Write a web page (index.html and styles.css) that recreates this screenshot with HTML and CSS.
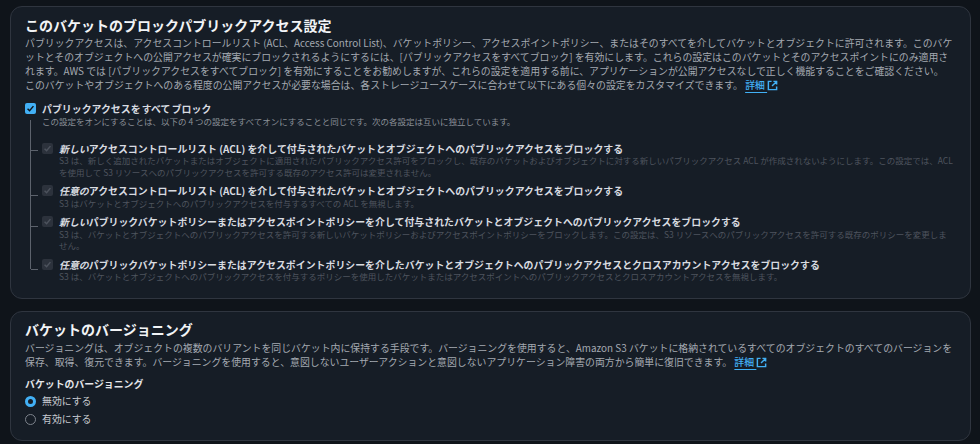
FILE: index.html
```html
<!DOCTYPE html>
<html lang="ja">
<head>
    <meta charset="UTF-8">
    <title>バケット設定</title>
    <link rel="stylesheet" href="styles.css">
</head>
<body>
    <section class="card block-card">
        <h2 class="card-title">このバケットのブロックパブリックアクセス設定</h2>
        <p class="card-text">パブリックアクセスは、アクセスコントロールリスト (ACL、Access Control List)、バケットポリシー、アクセスポイントポリシー、またはそのすべてを介してバケットとオブジェクトに許可されます。このバケ<br>ットとそのオブジェクトへの公開アクセスが確実にブロックされるようにするには、[パブリックアクセスをすべてブロック] を有効にします。これらの設定はこのバケットとそのアクセスポイントにのみ適用さ<br>れます。AWS では [パブリックアクセスをすべてブロック] を有効にすることをお勧めしますが、これらの設定を適用する前に、アプリケーションが公開アクセスなしで正しく機能することをご確認ください。<br>このバケットやオブジェクトへのある程度の公開アクセスが必要な場合は、各ストレージユースケースに合わせて以下にある個々の設定をカスタマイズできます。 <a class="info-link" href="#">詳細&nbsp;</a><svg class="ext-icon" viewBox="0 0 12 12"><path d="M5 1.5H1.5v9h9V7M7 1.5h3.5V5M10.2 1.8 5.5 6.5"/></svg></p>

        <div class="check-row main-check">
            <span class="checkbox checked"><svg viewBox="0 0 12 12"><path d="M2.8 6.2 5 8.4 9.2 3.4"/></svg></span>
            <div>
                <div class="check-label main-label">パブリックアクセスを すべて ブロック</div>
                <div class="check-desc main-desc">この設定をオンにすることは、以下の 4 つの設定をすべてオンにすることと同じです。次の各設定は互いに独立しています。</div>
            </div>
        </div>

        <ul class="check-tree">
            <li class="check-row tree-item">
                <span class="checkbox disabled"><svg viewBox="0 0 12 12"><path d="M2.8 6.2 5 8.4 9.2 3.4"/></svg></span>
                <div>
                    <div class="check-label"><em>新しい</em>アクセスコントロールリスト (ACL) を介して付与されたバケットとオブジェクトへのパブリックアクセスをブロックする</div>
                    <div class="check-desc">S3 は、新しく追加されたバケットまたはオブジェクトに適用されたパブリックアクセス許可をブロックし、既存のバケットおよびオブジェクトに対する新しいパブリックアクセス ACL が作成されないようにします。この設定では、ACL<br>を使用して S3 リソースへのパブリックアクセスを許可する既存のアクセス許可は変更されません。</div>
                </div>
            </li>
            <li class="check-row tree-item">
                <span class="checkbox disabled"><svg viewBox="0 0 12 12"><path d="M2.8 6.2 5 8.4 9.2 3.4"/></svg></span>
                <div>
                    <div class="check-label"><em>任意の</em>アクセスコントロールリスト (ACL) を介して付与されたバケットとオブジェクトへのパブリックアクセスをブロックする</div>
                    <div class="check-desc">S3 はバケットとオブジェクトへのパブリックアクセスを付与するすべての ACL を無視します。</div>
                </div>
            </li>
            <li class="check-row tree-item">
                <span class="checkbox disabled"><svg viewBox="0 0 12 12"><path d="M2.8 6.2 5 8.4 9.2 3.4"/></svg></span>
                <div>
                    <div class="check-label"><em>新しい</em>パブリックバケットポリシーまたはアクセスポイントポリシーを介して付与されたバケットとオブジェクトへのパブリックアクセスをブロックする</div>
                    <div class="check-desc">S3 は、バケットとオブジェクトへのパブリックアクセスを許可する新しいバケットポリシーおよびアクセスポイントポリシーをブロックします。この設定は、S3 リソースへのパブリックアクセスを許可する既存のポリシーを変更しま<br>せん。</div>
                </div>
            </li>
            <li class="check-row tree-item">
                <span class="checkbox disabled"><svg viewBox="0 0 12 12"><path d="M2.8 6.2 5 8.4 9.2 3.4"/></svg></span>
                <div>
                    <div class="check-label"><em>任意の</em>パブリックバケットポリシーまたはアクセスポイントポリシーを介したバケットとオブジェクトへのパブリックアクセスとクロスアカウントアクセスをブロックする</div>
                    <div class="check-desc">S3 は、バケットとオブジェクトへのパブリックアクセスを付与するポリシーを使用したバケットまたはアクセスポイントへのパブリックアクセスとクロスアカウントアクセスを無視します。</div>
                </div>
            </li>
        </ul>
    </section>

    <section class="card version-card">
        <h2 class="card-title">バケットのバージョニング</h2>
        <p class="card-text">バージョニングは、オブジェクトの複数のバリアントを同じバケット内に保持する手段です。バージョニングを使用すると、Amazon S3 バケットに格納されているすべてのオブジェクトのすべてのバージョンを<br>保存、取得、復元できます。バージョニングを使用すると、意図しないユーザーアクションと意図しないアプリケーション障害の両方から簡単に復旧できます。 <a class="info-link" href="#">詳細&nbsp;</a><svg class="ext-icon" viewBox="0 0 12 12"><path d="M5 1.5H1.5v9h9V7M7 1.5h3.5V5M10.2 1.8 5.5 6.5"/></svg></p>

        <div class="field-label">バケットのバージョニング</div>
        <div class="radio-row"><span class="radio selected"></span>無効にする</div>
        <div class="radio-row"><span class="radio"></span>有効にする</div>
    </section>
</body>
</html>
```

FILE: styles.css
```css
body {
    font-family: "Noto Sans CJK JP", "Noto Sans", sans-serif;
    margin: 0;
    padding: 6px 9px 0 10px;
    height: 444px;
    box-sizing: border-box;
    overflow: hidden;
    background-color: #0f141a;
    color: #c6cad0;
}

.card {
    background-color: #161d26;
    border: 1px solid #2f353f;
    border-radius: 12px;
    padding: 9px 14px 0 14px;
    box-sizing: border-box;
}
.block-card {
    height: 293px;
    margin-bottom: 12px;
}
.version-card {
    height: 130px;
    padding-top: 8px;
}

.card-title {
    margin: 0 0 2px 0;
    font-size: 14px;
    line-height: 18px;
    font-weight: 700;
    color: #f2f4f6;
}
.version-card .card-title {
    margin-bottom: 3px;
}

.card-text {
    margin: 0;
    font-size: 9.9px;
    line-height: 14.1px;
    color: #a4a9b1;
    white-space: nowrap;
}

.info-link {
    color: #42b0f5;
    font-weight: 500;
    text-decoration: underline;
    text-decoration-thickness: 1px;
    text-underline-offset: 2.5px;
}
.ext-icon {
    width: 11px;
    height: 11px;
    vertical-align: -2px;
    fill: none;
    stroke: #42b0f5;
    stroke-width: 1.6;
}

.check-row {
    display: flex;
    gap: 6px;
}
.main-check {
    margin-top: 10px;
}

.checkbox {
    flex: none;
    width: 11px;
    height: 11px;
    border-radius: 2px;
    margin-top: 1px;
}
.checkbox svg {
    display: block;
    fill: none;
    stroke-width: 1.6;
}
.checkbox.checked {
    background-color: #42b0f5;
}
.checkbox.checked svg {
    stroke: #0f141a;
}
.checkbox.disabled {
    background-color: #2c323c;
}
.checkbox.disabled svg {
    stroke: #4d535d;
}

.check-label {
    font-size: 9.92px;
    line-height: 13.5px;
    font-weight: 700;
    color: #d8dbe0;
}
.check-label em {
    font-style: italic;
}
.main-label {
    word-spacing: -1px;
}

.check-desc {
    font-size: 8.5px;
    line-height: 11.8px;
    color: #4e545e;
    white-space: nowrap;
}
.main-desc {
    color: #8b9098;
}

.check-tree {
    list-style: none;
    margin: -8px 0 0 5px;
    padding: 22px 0 0 11px;
    border-left: 1px solid #5c626c;
    height: 127px;
}
.tree-item {
    position: relative;
    margin-bottom: 5.5px;
}
.tree-item::before {
    content: "";
    position: absolute;
    left: -11px;
    top: 11px;
    width: 7px;
    border-top: 1px solid #5c626c;
}
.tree-item:first-child::before {
    top: 8px;
}

.field-label {
    margin-top: 8px;
    font-size: 9.9px;
    line-height: 14px;
    font-weight: 700;
    color: #e4e6ea;
}

.radio-row {
    display: flex;
    align-items: center;
    gap: 6px;
    margin-top: 3px;
    font-size: 9.9px;
    line-height: 15px;
    color: #c6cad0;
}
.radio {
    width: 11px;
    height: 11px;
    border-radius: 50%;
    border: 1px solid #7d838c;
    box-sizing: border-box;
}
.radio.selected {
    border: 3.5px solid #42b0f5;
    background-color: #161d26;
}
```
